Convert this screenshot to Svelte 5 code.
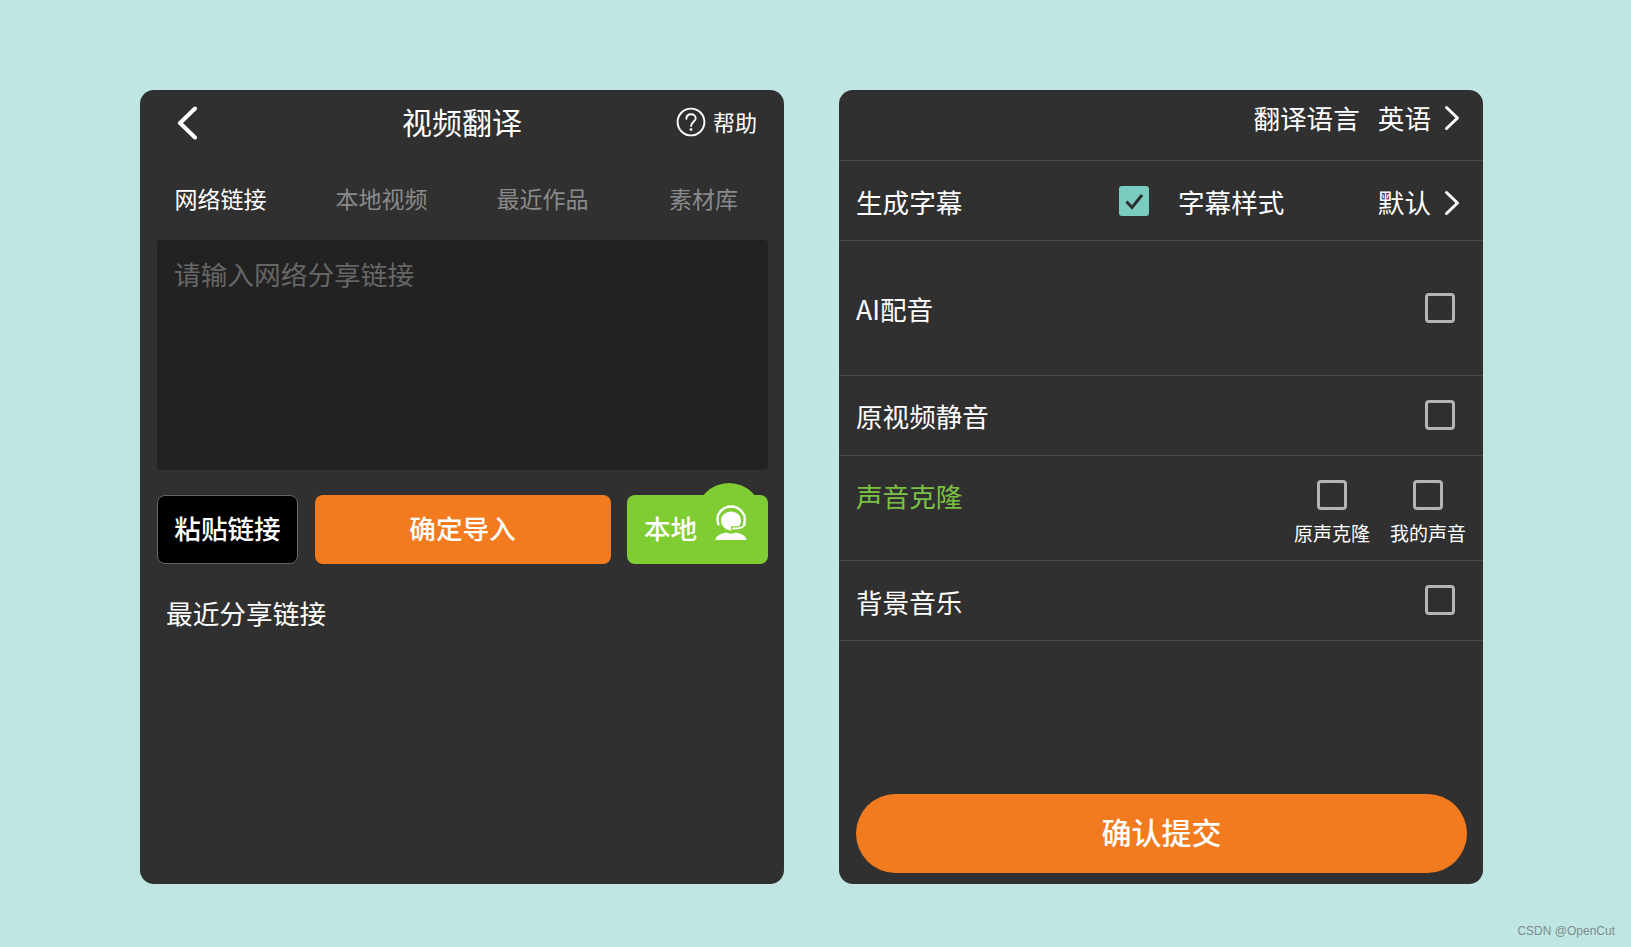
<script>
  const tabs = ['网络链接', '本地视频', '最近作品', '素材库'];
  let active = $state(0);
</script>

{#snippet chevron()}
  <svg class="chev" viewBox="0 0 16 26" width="16" height="26"><path d="M2.5 2.5 L13.5 13 L2.5 23.5" fill="none" stroke="#fff" stroke-width="3" stroke-linecap="round" stroke-linejoin="round"/></svg>
{/snippet}

<div class="page">
  <section class="panel">
    <header class="top">
      <svg class="back" viewBox="0 0 22 34" width="22" height="34"><path d="M19 2.5 L4 17 L19 31.5" fill="none" stroke="#fff" stroke-width="4" stroke-linecap="round" stroke-linejoin="round"/></svg>
      <h1>视频翻译</h1>
      <div class="help">
        <svg viewBox="0 0 30 30" width="30" height="30">
          <circle cx="15" cy="15" r="13.4" fill="none" stroke="#fff" stroke-width="1.9"/>
          <path d="M10.4 11.8 C10.4 8.9 12.5 7.2 15.1 7.2 C17.8 7.2 19.7 9 19.7 11.3 C19.7 14.6 15.1 15 15.1 18.9" fill="none" stroke="#fff" stroke-width="1.9" stroke-linecap="round"/>
          <circle cx="15" cy="22.6" r="1.4" fill="#fff"/>
        </svg>
        <span>帮助</span>
      </div>
    </header>

    <nav class="tabs">
      {#each tabs as t, i}
        <button class:active={active === i} onclick={() => active = i}>{t}</button>
      {/each}
    </nav>

    <div class="body">
      <div class="textarea">请输入网络分享链接</div>
      <div class="actions">
        <button class="btn paste">粘贴链接</button>
        <button class="btn confirm">确定导入</button>
        <button class="btn local">
          <span class="bump"></span>
          <span class="local-text">本地</span>
          <svg class="agent" viewBox="0 0 36 36" width="36" height="36">
            <path d="M5.5 19.5 C1.5 9 10 1.5 18 1.5 C26 1.5 34.5 9 31 18.5" fill="none" stroke="#fff" stroke-width="2.4" stroke-linecap="round"/>
            <path d="M8 15.5 C8 10 13 6.5 18 6.5 C23 6.5 28 10 28 15.5 C28 21 23 25.5 18 25.5 C13 25.5 8 21 8 15.5Z" fill="#fff"/>
            <path d="M31 20 C29 24.5 25 23.4 18 23.4" fill="none" stroke="#7fcd33" stroke-width="4.4"/>
            <path d="M32 19 C30 23.5 25 23.4 20 23.4" fill="none" stroke="#fff" stroke-width="2" stroke-linecap="round"/>
            <path d="M2.5 35 C3 30.5 7.5 29 13.5 27.6 C15.5 29 20.5 29 22.5 27.6 C28.5 29 33 30.5 33.5 35Z" fill="#fff"/>
          </svg>
        </button>
      </div>
      <div class="recent">最近分享链接</div>
    </div>
  </section>

  <section class="panel right">
    <div class="row r-lang">
      <span class="push">翻译语言</span>
      <span class="val">英语</span>
      {@render chevron()}
    </div>
    <div class="row r-sub">
      <span class="label sub-label">生成字幕</span>
      <span class="check on">
        <svg viewBox="0 0 30 30" width="30" height="30"><path d="M7.5 15.5 L13 21.5 L23 9" fill="none" stroke="#2b2f2f" stroke-width="3"/></svg>
      </span>
      <span class="style-label">字幕样式</span>
      <span class="val">默认</span>
      {@render chevron()}
    </div>
    <div class="row r-ai">
      <span class="label">AI配音</span>
      <span class="check"></span>
    </div>
    <div class="row r-mute">
      <span class="label">原视频静音</span>
      <span class="check"></span>
    </div>
    <div class="row r-clone">
      <span class="label green">声音克隆</span>
      <div class="clone-opts">
        <div class="opt"><span class="check"></span><small>原声克隆</small></div>
        <div class="opt"><span class="check"></span><small>我的声音</small></div>
      </div>
    </div>
    <div class="row r-bgm">
      <span class="label">背景音乐</span>
      <span class="check"></span>
    </div>
    <div class="foot">
      <button class="submit">确认提交</button>
    </div>
  </section>

  <div class="mark">CSDN @OpenCut</div>
</div>

<style>
  :global(body) { margin: 0; background: #bfe6e3; }
  .page {
    position: relative;
    box-sizing: border-box;
    height: 947px;
    padding: 90px 0 0 140px;
    display: flex;
    align-items: flex-start;
    gap: 55px;
    background: #bfe6e3;
    overflow: hidden;
    font-family: "Noto Sans CJK SC", "Noto Sans", sans-serif;
    color: #fff;
  }
  button { font-family: inherit; border: none; cursor: pointer; padding: 0; }

  .panel {
    width: 644px;
    height: 794px;
    background: #303030;
    border-radius: 14px;
    display: flex;
    flex-direction: column;
  }

  .top {
    height: 66px;
    flex: none;
    display: flex;
    align-items: center;
    justify-content: space-between;
    padding: 0 27px 0 36px;
    position: relative;
  }
  .back { display: block; }
  h1 {
    position: absolute;
    left: 0;
    right: 0;
    margin: 0;
    padding-bottom: 4px;
    text-align: center;
    font-size: 30px;
    font-weight: 400;
    line-height: 40px;
    pointer-events: none;
  }
  .help { display: flex; align-items: center; gap: 7px; font-size: 22px; padding-bottom: 2px; }
  .help svg { display: block; }
  .help span { padding-bottom: 2px; }

  .tabs {
    height: 84px;
    flex: none;
    display: grid;
    grid-template-columns: repeat(4, 1fr);
    align-items: center;
    box-sizing: border-box;
  }
  .tabs button { background: none; color: #8a8a8a; font-size: 23px; line-height: 30px; }
  .tabs button.active { color: #fff; }

  .body { padding: 0 16px 0 17px; display: flex; flex-direction: column; }
  .textarea {
    height: 230px;
    box-sizing: border-box;
    background: #222;
    border-radius: 4px;
    padding: 14px 17px;
    font-size: 26.7px;
    line-height: 40px;
    color: #666;
  }
  .actions {
    margin-top: 25px;
    display: grid;
    grid-template-columns: 141px 1fr 141px;
    gap: 17px 16.5px;
  }
  .btn {
    height: 69px;
    padding-bottom: 4px;
    border-radius: 8px;
    color: #fff;
    font-size: 26.6px;
    font-weight: 500;
  }
  .paste { background: #000; border: 1px solid #666; }
  .confirm { background: #f37b1f; }
  .local {
    position: relative;
    background: #7fcd33;
    display: flex;
    align-items: center;
    padding-left: 17px;
  }
  .bump {
    position: absolute;
    left: 69px;
    top: -12px;
    width: 66px;
    height: 66px;
    border-radius: 50%;
    background: #7fcd33;
  }
  .local-text { position: relative; }
  .agent { position: absolute; right: 19px; top: 10px; }
  .recent { margin-top: 29px; padding-left: 9px; font-size: 26.7px; line-height: 40px; }

  .row {
    box-sizing: border-box;
    flex: none;
    display: flex;
    align-items: center;
    padding: 0 28px 0 17px;
    border-bottom: 1px solid #4a4a4a;
    font-size: 26.6px;
    line-height: 40px;
  }
  .label { flex: 1; }
  .push { margin-left: auto; }
  .val { margin-left: 18px; }
  .chev { margin-left: 13px; margin-right: -5px; display: block; }

  .r-lang { height: 71px; padding-bottom: 14px; }
  .r-lang span { padding-bottom: 1px; }
  .r-sub { height: 80px; }
  .sub-label { flex: 0 0 263px; padding-top: 2px; }
  .style-label { margin-left: 29px; flex: 1; padding-top: 2px; }
  .r-sub .val { margin-left: 0; padding-top: 2px; }
  .r-sub .chev { margin-top: 5px; }
  .r-ai { height: 135px; }
  .r-ai .label { padding-top: 2px; }
  .r-mute { height: 80px; }
  .r-mute .check { margin-top: -2px; }
  .r-clone { height: 105px; align-items: flex-start; padding: 24px 17px 0 17px; }
  .r-clone .label { margin-top: -4px; }
  .green { color: #7ac143; }
  .clone-opts { display: flex; gap: 20px; }
  .opt { width: 76px; display: flex; flex-direction: column; align-items: center; gap: 9px; }
  .opt small { font-size: 19px; line-height: 28px; white-space: nowrap; }
  .r-bgm { height: 80px; }
  .r-bgm .label { padding-top: 2px; }
  .r-bgm .check { margin-top: -2px; }

  .check {
    box-sizing: border-box;
    flex: none;
    width: 30px;
    height: 30px;
    border: 3.5px solid #b4b4b4;
    border-radius: 4px;
    display: block;
  }
  .check.on {
    background: #7accc0;
    border: none;
    border-radius: 3px;
  }
  .check.on svg { display: block; }

  .foot { margin-top: auto; padding: 0 16px 11px 17px; }
  .submit {
    width: 100%;
    height: 79px;
    padding-bottom: 6px;
    border-radius: 40px;
    background: #f37b1f;
    color: #fff;
    font-size: 30px;
    font-weight: 500;
  }

  .mark {
    position: absolute;
    right: 16px;
    bottom: 8px;
    font-family: "Liberation Sans", sans-serif;
    font-size: 12px;
    line-height: 16px;
    color: #7f8c8b;
  }
</style>
